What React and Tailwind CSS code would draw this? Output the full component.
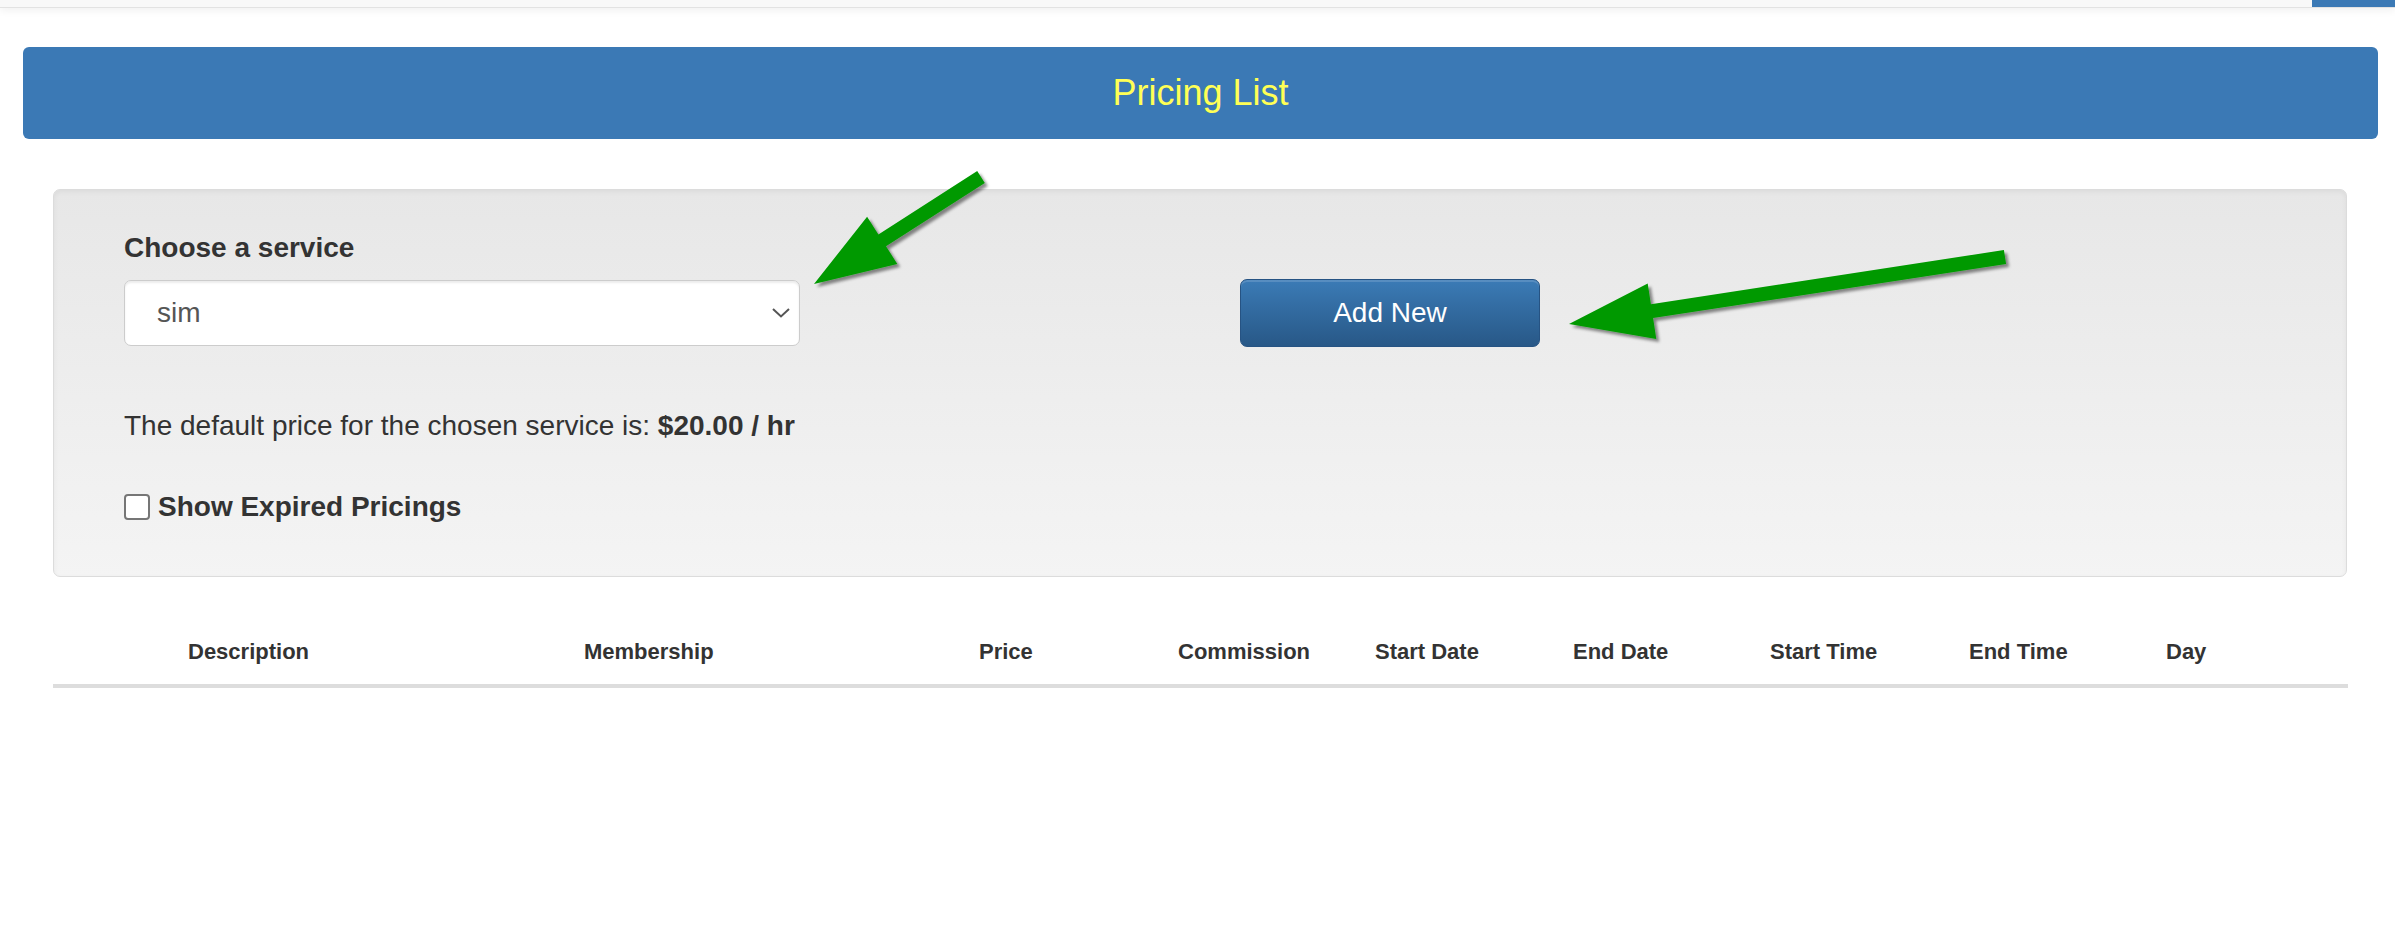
import React from "react";

const cols = [
  { w: "w-[135px]", t: "" },
  { w: "w-[396px]", t: "Description" },
  { w: "w-[395px]", t: "Membership" },
  { w: "w-[199px]", t: "Price" },
  { w: "w-[197px]", t: "Commission" },
  { w: "w-[198px]", t: "Start Date" },
  { w: "w-[197px]", t: "End Date" },
  { w: "w-[199px]", t: "Start Time" },
  { w: "w-[197px]", t: "End Time" },
  { w: "flex-1", t: "Day" },
];

export default function App() {
  return (
    <div className="relative w-[2395px] min-h-[927px] bg-white font-['Liberation_Sans',Arial,sans-serif] text-[#333] overflow-hidden">
      {/* top navbar remnant */}
      <div className="relative z-10 h-[8px] bg-[#f8f8f8] border-b border-[#e2e2e2] shadow-[0_2px_9px_rgba(0,0,0,0.07)] flex justify-end">
        <div className="w-[83px] h-[7px] bg-[#3b79b5]" />
      </div>

      {/* header */}
      <div className="ml-[23px] mr-[17px] mt-[39px] h-[92px] rounded-[6px] bg-[#3b79b5] flex items-center justify-center">
        <span className="text-[36px] leading-[40px] text-[#ffff55]">Pricing List</span>
      </div>

      {/* well panel */}
      <div className="ml-[53px] mr-[48px] mt-[50px] h-[388px] box-border rounded-[7px] border border-[#dcdcdc] bg-gradient-to-b from-[#e7e7e7] to-[#f4f4f4] shadow-[inset_0_2px_5px_rgba(0,0,0,0.05)] pt-[42px] pl-[70px]">
        <div className="flex items-end">
          <div className="w-[676px]">
            <div className="text-[28px] leading-[32px] font-bold">Choose a service</div>
            <div className="mt-[16px] h-[66px] box-border rounded-[7px] border border-[#cccccc] bg-white shadow-[inset_0_2px_2px_rgba(0,0,0,0.075)] flex items-center pl-[32px] pr-[9px]">
              <span className="flex-1 text-[28px] leading-[32px] text-[#555]">sim</span>
              <svg width="18" height="10" viewBox="0 0 18 10" className="block">
                <path d="M1 1 L9 8.5 L17 1" fill="none" stroke="#555" strokeWidth="2" />
              </svg>
            </div>
          </div>
          <button className="ml-[440px] mb-[-1px] w-[300px] h-[68px] box-border rounded-[7px] border border-[#265383] bg-gradient-to-b from-[#3b7bb6] to-[#285887] shadow-[inset_0_2px_0_rgba(255,255,255,0.15)] text-white text-[28px] leading-[32px]">
            Add New
          </button>
        </div>
        <div className="mt-[64px] text-[28px] leading-[32px]">
          The default price for the chosen service is: <b>$20.00 / hr</b>
        </div>
        <div className="mt-[49px] flex items-center">
          <span className="block w-[26px] h-[26px] box-border rounded-[4px] border-2 border-[#767676] bg-white" />
          <span className="ml-[8px] text-[28px] leading-[32px] font-bold">Show Expired Pricings</span>
        </div>
      </div>

      {/* table header */}
      <div className="ml-[53px] mr-[47px] mt-[61px] flex pb-[18px] border-b-4 border-[#dddddd]">
        {cols.map((c, i) => (
          <div key={i} className={`${c.w} text-[22px] leading-[28px] font-bold text-[#333]`}>
            {c.t}
          </div>
        ))}
      </div>

      {/* annotation arrows */}
      <svg
        className="absolute left-0 top-0 pointer-events-none"
        width="2395"
        height="927"
        viewBox="0 0 2395 927"
      >
        <defs>
          <filter id="sh" x="-20%" y="-20%" width="140%" height="140%">
            <feDropShadow dx="3" dy="3" stdDeviation="1.8" floodColor="#000" floodOpacity="0.45" />
          </filter>
        </defs>
        <polygon
          filter="url(#sh)"
          fill="#009900"
          points="977.2,171.1 878.4,234.4 867.1,216.7 814,284 897.3,263.9 886,246.2 984.8,182.9"
        />
        <polygon
          filter="url(#sh)"
          fill="#009900"
          points="2003.9,250.1 1650.9,304.3 1647.7,283.5 1569,324 1656.3,338.9 1653.1,318.1 2006.1,263.9"
        />
      </svg>
    </div>
  );
}
